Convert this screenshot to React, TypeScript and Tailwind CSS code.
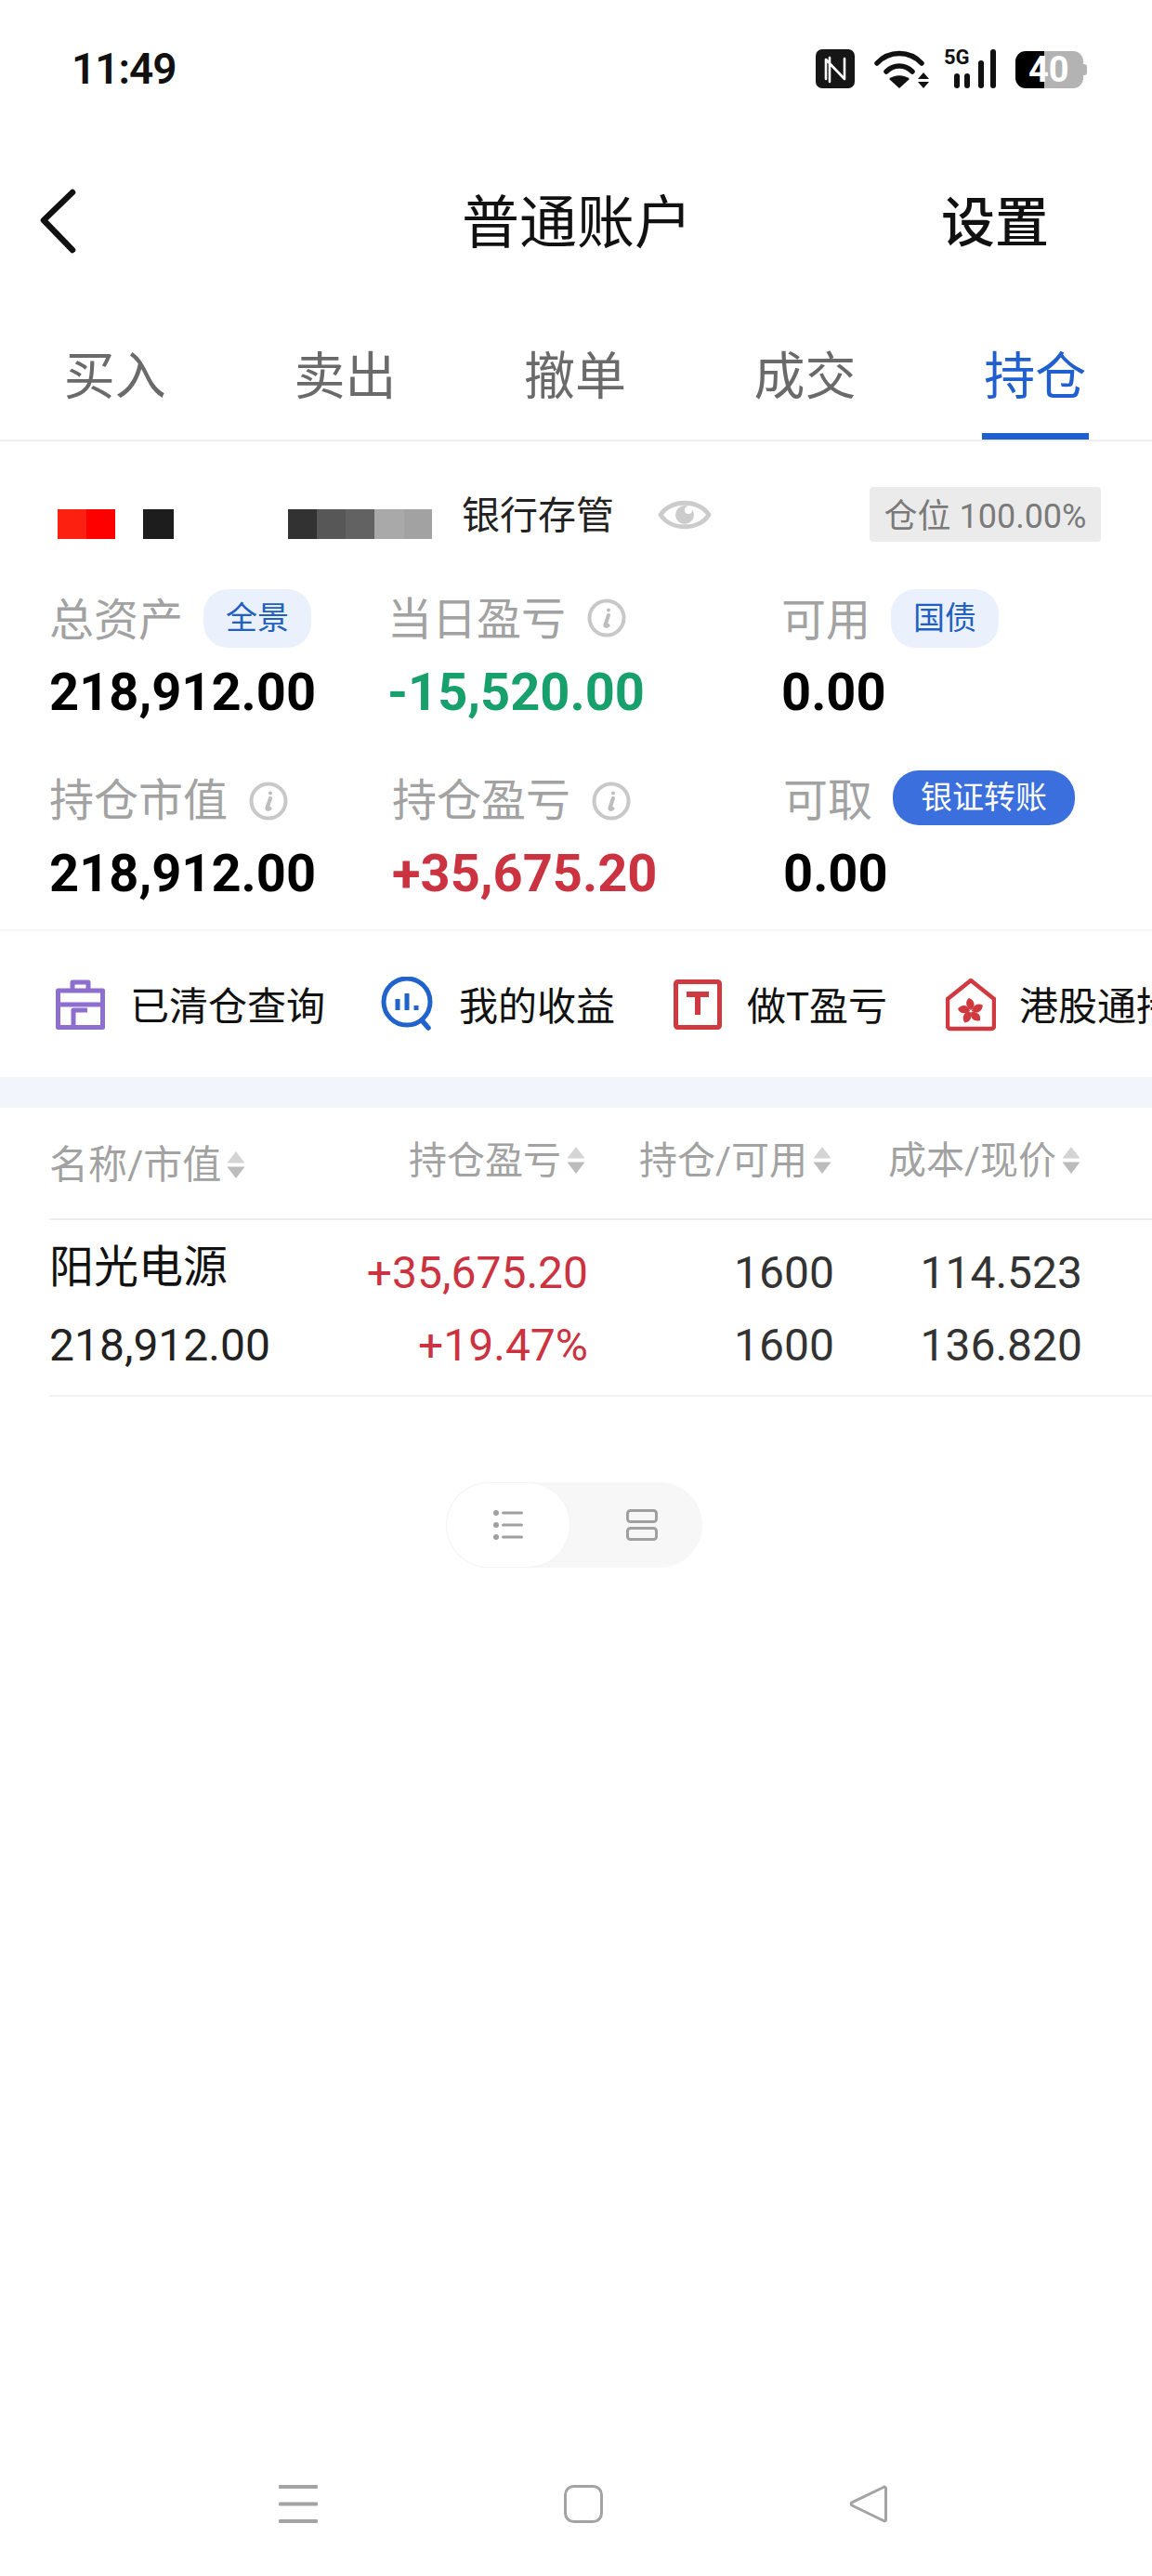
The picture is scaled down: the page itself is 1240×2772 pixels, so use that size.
import React from "react";

const font = { fontFamily: 'Roboto, "Noto Sans CJK SC", sans-serif' };

function Info() {
  return (
    <svg width="42" height="42" viewBox="0 0 42 42" className="shrink-0">
      <circle cx="21" cy="21" r="18.5" fill="none" stroke="#c8c8c8" strokeWidth="4" />
      <path d="M23 12.5v.1M23 18l-3.5 10.5c-.5 1.6 1 1.8 3 .5" fill="none" stroke="#bdbdbd" strokeWidth="4" strokeLinecap="round" />
    </svg>
  );
}

function Sort() {
  return (
    <svg width="20" height="29" viewBox="0 0 20 29" className="shrink-0 ml-[6px]">
      <path d="M10 0l9.5 12.5H.5z" fill="#d4d4d4" />
      <path d="M10 29L.5 16.5h19z" fill="#bcbcbc" />
    </svg>
  );
}

function Pill({ children }: { children: React.ReactNode }) {
  return (
    <div className="h-[63px] w-[116px] rounded-[26px] bg-[#ebf1fc] text-[#2160c0] text-[34px] leading-[63px] text-center shrink-0">
      {children}
    </div>
  );
}

function Label({ children, lh = "leading-[64px]" }: { children: React.ReactNode; lh?: string }) {
  return <div className={`h-[64px] text-[48px] text-[#a2a2a2] whitespace-nowrap ${lh}`}>{children}</div>;
}

function Value({ children, className = "text-black", mt = "mt-[16px]" }: { children: React.ReactNode; className?: string; mt?: string }) {
  return <div className={`text-[56px] leading-[64px] font-bold whitespace-nowrap ${mt} ${className}`}>{children}</div>;
}

function Shortcut({ icon, text, gap, w }: { icon: React.ReactNode; text: string; gap: string; w: string }) {
  return (
    <div className={`flex items-center shrink-0 ${w}`}>
      {icon}
      <span className={`text-[42px] leading-[60px] pt-[6px] text-[#111] whitespace-nowrap ${gap}`}>{text}</span>
    </div>
  );
}

function Head({ text, w, className = "" }: { text: string; w: string; className?: string }) {
  return (
    <div className={`flex items-center justify-end text-[41px] leading-[56px] text-[#a2a2a2] whitespace-nowrap ${w} ${className}`}>
      {text}
      <Sort />
    </div>
  );
}

function Col({ a, b, w, color = "text-[#333]" }: { a: string; b: string; w: string; color?: string }) {
  return (
    <div className={`text-right text-[48px] leading-[60px] pt-[2px] ${w} ${color}`}>
      <div className="h-[60px]">{a}</div>
      <div className="h-[60px] mt-[18px]">{b}</div>
    </div>
  );
}

const petal = "M0-1C-5-4-7-10-2-14 4-12 6-5 0-1z";

export default function App() {
  return (
    <div className="w-[1240px] h-[2772px] bg-white overflow-hidden flex flex-col" style={font}>
      {/* status bar */}
      <div className="h-[190px] shrink-0 flex items-start pt-[53px] pl-[77px] relative">
        <div className="text-[46px] leading-[42px] font-semibold text-[#111] tracking-[-1px] w-[801px]">11:49</div>
        <svg width="42" height="42" viewBox="0 0 42 42" className="shrink-0">
          <rect width="42" height="42" rx="7" fill="#161616" />
          <path d="M11 32V11l20 21V10M15 9v26" fill="none" stroke="#fff" strokeWidth="2.6" strokeLinejoin="round" strokeLinecap="round" />
        </svg>
        <svg width="60" height="42" viewBox="0 0 60 42" className="shrink-0 ml-[21px]">
          <path d="M3 15C16 1 38 1 51 15M13 24c8-8 20-8 28 0" fill="none" stroke="#111" strokeWidth="5.5" strokeLinecap="round" />
          <path d="M27 42L16 32c6-5 16-5 22 0z" fill="#111" />
          <path d="M53 25l6 7H47zM53 42l-6-7h12z" fill="#111" />
        </svg>
        <div className="relative w-[56px] h-[42px] ml-[15px] shrink-0">
          <span className="absolute left-0 top-[-3px] text-[22px] leading-[24px] font-bold text-[#111]">5G</span>
          <svg width="56" height="42" viewBox="0 0 56 42" className="absolute left-0 top-0">
            <rect x="11" y="26" width="6" height="16" rx="3" fill="#111" />
            <rect x="22" y="26" width="6" height="16" rx="3" fill="#111" />
            <rect x="37" y="12" width="6" height="30" rx="3" fill="#111" />
            <rect x="50" y="0" width="6" height="42" rx="3" fill="#111" />
          </svg>
        </div>
        <div className="relative flex w-[77px] h-[40px] mt-[2px] ml-[21px] shrink-0">
          <div className="w-[31px] h-full bg-black rounded-l-[11px]" />
          <div className="w-[42px] h-full bg-[#b3b3b3] rounded-r-[11px]" />
          <div className="w-[4px] h-[12px] mt-[14px] bg-[#b3b3b3] rounded-r-[3px]" />
          <span className="absolute left-[14px] top-0 text-[38px] leading-[40px] font-bold text-white">40</span>
        </div>
      </div>

      {/* nav */}
      <div className="h-[96px] shrink-0 flex items-center">
        <svg width="40" height="70" viewBox="0 0 40 70" className="ml-[42px] shrink-0">
          <path d="M36 4L5 34l31 32" fill="none" stroke="#111" strokeWidth="6.5" strokeLinecap="round" strokeLinejoin="round" />
        </svg>
        <div className="ml-[415px] w-[248px] pt-[6px] text-[62px] leading-[76px] text-[#111] whitespace-nowrap">普通账户</div>
        <div className="ml-[268px] pt-[4px] text-[58px] leading-[74px] font-medium text-[#111] whitespace-nowrap">设置</div>
      </div>

      {/* tabs */}
      <div className="h-[189px] shrink-0 pt-[89px] flex border-b-2 border-[#eeeeee]">
        {["买入", "卖出", "撤单", "成交"].map((t) => (
          <div key={t} className="w-[247.6px] text-center text-[55px] leading-[60px] text-[#6a6a6a]">
            {t}
          </div>
        ))}
        <div className="w-[247.6px] flex justify-center">
          <div className="w-[115px] h-[98px] border-b-[7px] border-[#1f5fcf] text-center text-[55px] leading-[60px] text-[#1f5fcf] whitespace-nowrap">
            持仓
          </div>
        </div>
      </div>

      {/* account row */}
      <div className="h-[59px] mt-[49px] shrink-0 flex items-center">
        <div className="flex items-start mt-[21px] ml-[62px] h-[32px] shrink-0">
          <div className="w-[31px] h-full bg-[#fb2010]" />
          <div className="w-[31px] h-full bg-[#fe0000]" />
          <div className="w-[33px] h-full bg-[#1d1d1d] ml-[30px]" />
          <div className="w-[31px] h-full bg-[#323232] ml-[123px]" />
          <div className="w-[31px] h-full bg-[#575757]" />
          <div className="w-[31px] h-full bg-[#626262]" />
          <div className="w-[32px] h-full bg-[#a9a9a9]" />
          <div className="w-[30px] h-full bg-[#a2a2a2]" />
        </div>
        <div className="ml-[32px] w-[165px] pt-[2px] text-[41px] leading-[50px] text-[#222] whitespace-nowrap">银行存管</div>
        <svg width="58" height="44" viewBox="0 0 58 44" className="ml-[46px] shrink-0">
          <path d="M3 22C14 5 44 5 55 22 44 39 14 39 3 22z" fill="none" stroke="#cccccc" strokeWidth="5" strokeLinejoin="round" />
          <circle cx="29" cy="22" r="10" fill="#cccccc" />
          <circle cx="33" cy="17" r="4" fill="#fff" />
        </svg>
        <div className="ml-[170px] w-[249px] h-[59px] rounded-[4px] bg-[#ebebeb] text-[#7a7a7a] text-[36px] leading-[65px] text-center whitespace-nowrap">
          仓位 100.00%
        </div>
      </div>

      {/* stats */}
      <div className="mt-[50px] shrink-0 flex pl-[53px]">
        <div className="w-[364px]">
          <div className="flex items-center gap-[22px]">
            <Label lh="leading-[70px]">总资产</Label>
            <Pill>全景</Pill>
          </div>
          <Value>218,912.00</Value>
        </div>
        <div className="w-[424px]">
          <div className="flex items-center gap-[23px]">
            <Label lh="leading-[68px]">当日盈亏</Label>
            <Info />
          </div>
          <Value className="text-[#17a06c]">-15,520.00</Value>
        </div>
        <div>
          <div className="flex items-center gap-[22px]">
            <Label lh="leading-[70px]">可用</Label>
            <Pill>国债</Pill>
          </div>
          <Value>0.00</Value>
        </div>
      </div>
      <div className="mt-[53px] shrink-0 flex pl-[53px]">
        <div className="w-[369px]">
          <div className="flex items-center gap-[23px]">
            <Label>持仓市值</Label>
            <Info />
          </div>
          <Value mt="mt-[14px]">218,912.00</Value>
        </div>
        <div className="w-[421px]">
          <div className="flex items-center gap-[23px]">
            <Label>持仓盈亏</Label>
            <Info />
          </div>
          <Value mt="mt-[14px]" className="text-[#cc3341]">+35,675.20</Value>
        </div>
        <div>
          <div className="flex items-center gap-[22px]">
            <Label>可取</Label>
            <div className="h-[59px] w-[196px] -mt-[7px] rounded-[28px] bg-[#3a6fdd] text-white text-[34px] leading-[59px] text-center shrink-0">银证转账</div>
          </div>
          <Value mt="mt-[14px]">0.00</Value>
        </div>
      </div>

      {/* shortcuts */}
      <div className="mt-[28px] h-[159px] shrink-0 border-t-2 border-[#f4f4f4] flex items-center pl-[60px] overflow-hidden">
        <Shortcut
          w="w-[350px]"
          gap="ml-[27px]"
          icon={
            <svg width="53" height="54" viewBox="0 0 53 54" className="shrink-0">
              <path d="M2.5 12h48v39.5h-48zM2.5 27h48M18 12V3h17v9M19 51V33h15" fill="none" stroke="#8e6fd0" strokeWidth="5" strokeLinejoin="round" />
            </svg>
          }
          text="已清仓查询"
        />
        <Shortcut
          w="w-[315px]"
          gap="ml-[24px]"
          icon={
            <svg width="60" height="60" viewBox="0 0 60 60" className="shrink-0">
              <circle cx="28" cy="27" r="25" fill="none" stroke="#2163cc" strokeWidth="5" />
              <path d="M44 47l7 8" stroke="#2163cc" strokeWidth="5.5" strokeLinecap="round" />
              <path d="M18 24v12M28 18v18M38 31v5" stroke="#2163cc" strokeWidth="5" />
            </svg>
          }
          text="我的收益"
        />
        <Shortcut
          w="w-[293px]"
          gap="ml-[27px]"
          icon={
            <svg width="52" height="54" viewBox="0 0 52 54" className="shrink-0">
              <rect x="2.5" y="2.5" width="47" height="49" rx="2" fill="none" stroke="#cf3a40" strokeWidth="5" />
              <path d="M14 16h24M26 16v22" fill="none" stroke="#cf3a40" strokeWidth="6" />
            </svg>
          }
          text="做T盈亏"
        />
        <Shortcut
          w="w-[400px]"
          gap="ml-[25px]"
          icon={
            <svg width="54" height="58" viewBox="0 0 54 58" className="shrink-0">
              <path d="M27 3L52 23v29a3 3 0 0 1-3 3H5a3 3 0 0 1-3-3V23z" fill="none" stroke="#cf3a40" strokeWidth="4.5" strokeLinejoin="round" />
              <g fill="#cf3a40" transform="translate(27 36)">
                <path d={petal} />
                <path d={petal} transform="rotate(72)" />
                <path d={petal} transform="rotate(144)" />
                <path d={petal} transform="rotate(216)" />
                <path d={petal} transform="rotate(288)" />
              </g>
            </svg>
          }
          text="港股通持仓"
        />
      </div>

      {/* band */}
      <div className="h-[33px] shrink-0 bg-[#f2f5fc]" />

      {/* table head */}
      <div className="ml-[53px] h-[121px] shrink-0 border-b-2 border-[#eeeeee] flex items-center pt-[4px]">
        <div className="w-[209px] flex items-center text-[42px] leading-[56px] text-[#a2a2a2] whitespace-nowrap">
          名称/市值
          <Sort />
        </div>
        <Head text="持仓盈亏" w="w-[368px]" className="pb-[10px]" />
        <Head text="持仓/可用" w="w-[265px]" className="pb-[10px]" />
        <Head text="成本/现价" w="w-[268px]" className="pb-[10px]" />
      </div>

      {/* row */}
      <div className="ml-[53px] h-[190px] shrink-0 border-b-2 border-[#f2f2f2] flex pt-[25px]">
        <div className="w-[242px] text-[#111]">
          <div className="h-[60px] text-[48px] leading-[52px] whitespace-nowrap">阳光电源</div>
          <div className="h-[60px] mt-[20px] text-[48px] leading-[60px] whitespace-nowrap text-[#222]">218,912.00</div>
        </div>
        <Col a="+35,675.20" b="+19.47%" w="w-[338px]" color="text-[#cc3341]" />
        <Col a="1600" b="1600" w="w-[265px]" />
        <Col a="114.523" b="136.820" w="w-[267px]" />
      </div>

      {/* toggle */}
      <div className="ml-[480px] mt-[92px] w-[276px] h-[92px] shrink-0 rounded-[46px] bg-[#f7f7f7] flex items-center">
        <div className="w-[134px] h-[92px] rounded-[46px] bg-white border border-[#f4f4f4] flex items-center justify-center">
          <svg width="32" height="32" viewBox="0 0 32 32">
            <g fill="#a0a0a0">
              <circle cx="3" cy="3" r="3" />
              <circle cx="3" cy="16" r="3" />
              <circle cx="3" cy="29" r="3" />
              <rect x="9" y="1.5" width="23" height="3" rx="1.5" />
              <rect x="9" y="14.5" width="23" height="3" rx="1.5" />
              <rect x="9" y="27.5" width="23" height="3" rx="1.5" />
            </g>
          </svg>
        </div>
        <svg width="34" height="34" viewBox="0 0 34 34" className="ml-[60px]">
          <rect x="1.5" y="1.5" width="31" height="12" rx="3" fill="none" stroke="#a0a0a0" strokeWidth="3" />
          <rect x="1.5" y="20.5" width="31" height="12" rx="3" fill="none" stroke="#a0a0a0" strokeWidth="3" />
        </svg>
      </div>

      {/* bottom nav */}
      <div className="mt-auto mb-[57px] pl-[300px] flex items-center gap-[265px] shrink-0">
        <svg width="42" height="41" viewBox="0 0 42 41">
          <rect y="0" width="42" height="4" rx="1" fill="#a3a3a3" />
          <rect y="18.5" width="42" height="4" rx="1" fill="#a3a3a3" />
          <rect y="37" width="42" height="4" rx="1" fill="#a3a3a3" />
        </svg>
        <svg width="42" height="41" viewBox="0 0 42 41">
          <rect x="1.5" y="1.5" width="39" height="38" rx="9" fill="none" stroke="#a3a3a3" strokeWidth="3" />
        </svg>
        <svg width="41" height="41" viewBox="0 0 41 41">
          <path d="M37 2.5a1.5 1.5 0 0 1 2.5 1.2v33.6a1.5 1.5 0 0 1-2.5 1.2L3 22a2 2 0 0 1 0-3.2z" fill="none" stroke="#a3a3a3" strokeWidth="3" strokeLinejoin="round" />
        </svg>
      </div>
    </div>
  );
}
